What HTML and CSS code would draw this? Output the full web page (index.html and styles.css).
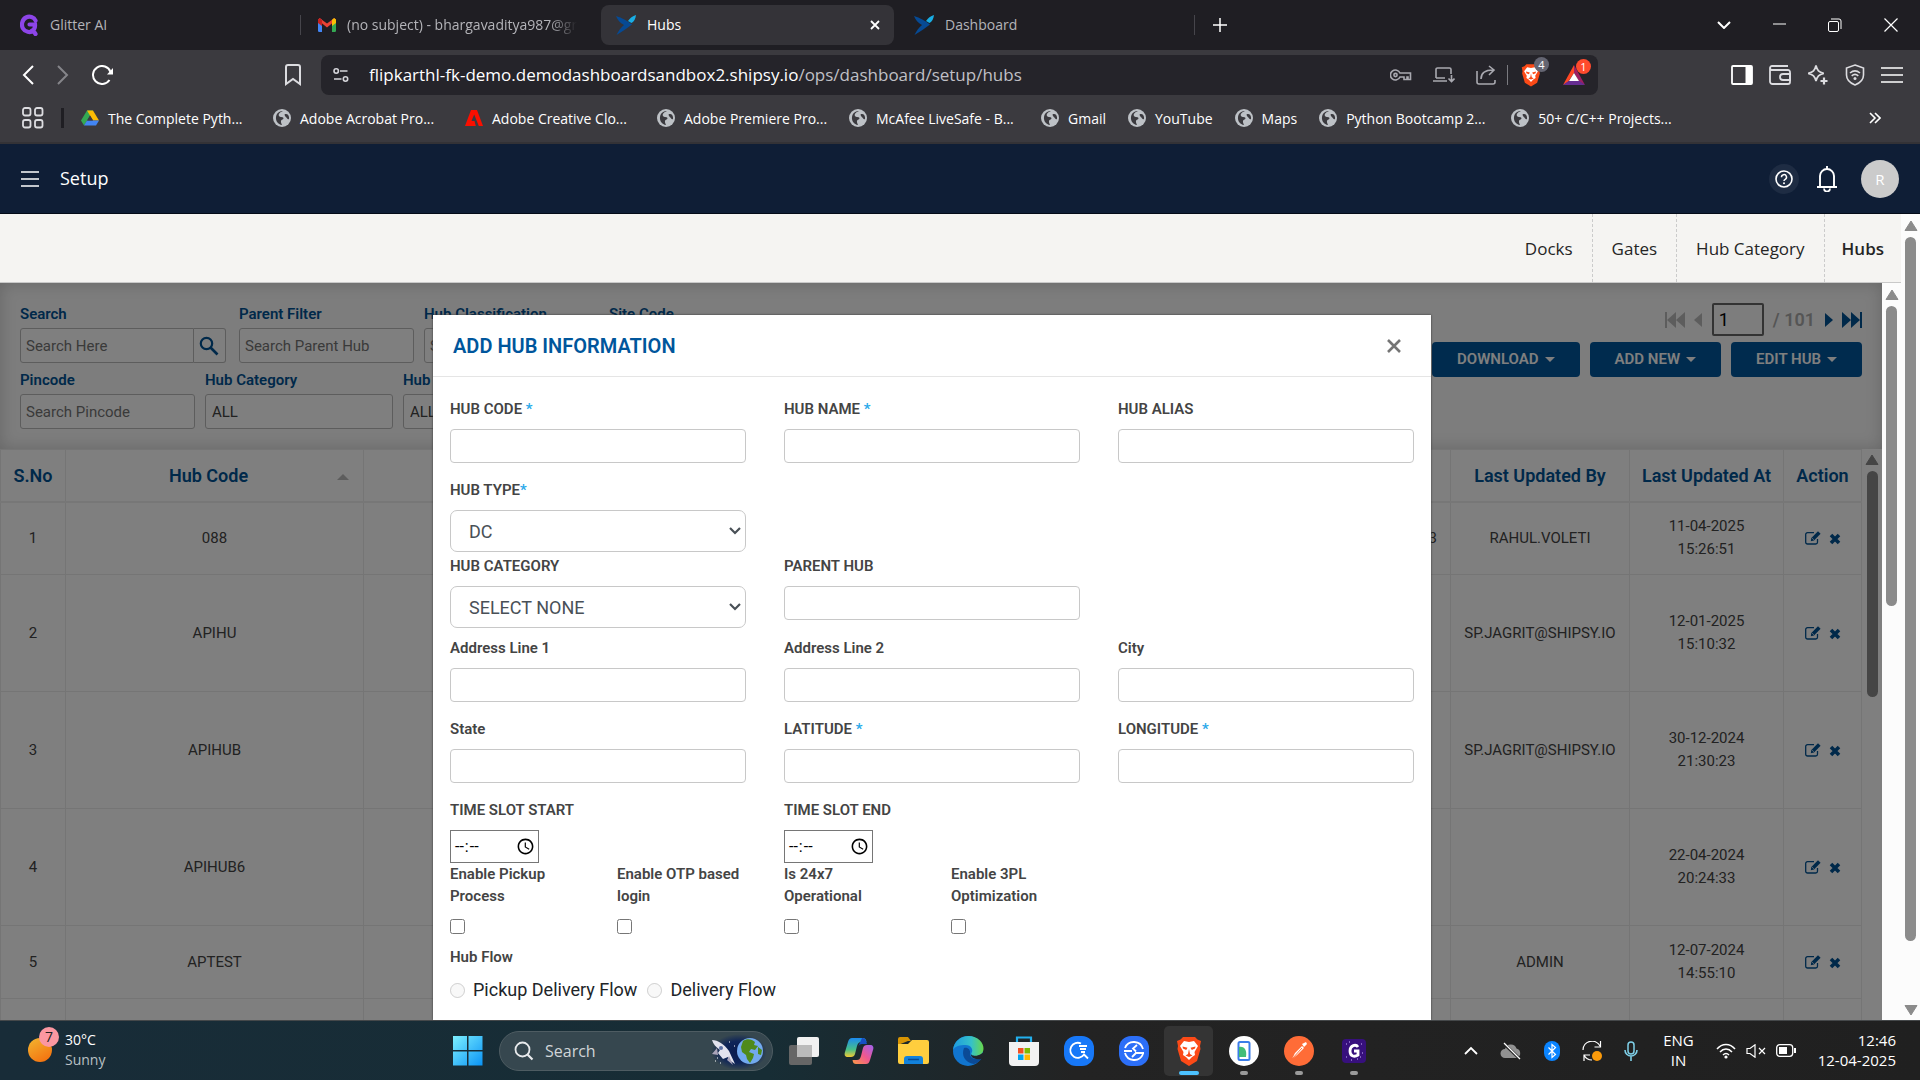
FILE: index.html
```html
<!DOCTYPE html>
<html lang="en">
<head>
<meta charset="utf-8">
<title>Hubs</title>
<link rel="stylesheet" href="styles.css">
</head>
<body>
<svg class="defs" aria-hidden="true">
  <symbol id="globe" viewBox="0 0 18 18"><circle cx="9" cy="9" r="9" fill="#bdc1c6"/><path d="M10 2c-3 1-5 3-4 5 1 1.600 4 .6 4.400 2 .4 1.600-2 1.500-2.400 3-.3 1.500.5 2.600 1 4-4-.5-6.500-4-6-8C3.500 4.500 6 2 10 2z" fill="#3b3a3f"/><path d="M11.500 5.500c1-.8 2.600-.6 3.500.2.900 1.300 1.200 2.600 1 4.300-.9.600-1.600 0-2-.8-.6-1.200-2.300-1.500-2.500-3.700z" fill="#3b3a3f"/></symbol>
  <symbol id="shipsy" viewBox="0 0 20 20"><path d="M0 1c6 2 11 4.500 16 8.500C11 13 6 17 .5 20 2.500 15.500 5 12.500 8 10 4 8 1.500 5 0 1z" fill="#064a94"/><path d="M20 0c-.5 4-2 6.500-4.500 8L12 6c2-3 4.500-5 8-6z" fill="#19aee5"/></symbol>
  <symbol id="edit" viewBox="0 0 16 14"><path d="M12.500 8v3.200a1.800 1.800 0 0 1-1.800 1.800H2.500A1.800 1.800 0 0 1 .7 11.200V3.500a1.800 1.800 0 0 1 1.800-1.800H9" fill="none" stroke="#005294" stroke-width="1.300"/><path d="M13 .3l2.600 2.400-6.600 6.800-3.200.8.500-3.300z" fill="#005294"/><path d="M7.200 7.200l1.600 1.500" stroke="#fff" stroke-width=".8"/></symbol>
  <symbol id="cross" viewBox="0 0 12 12"><path d="M2 2l8 8M10 2l-8 8" stroke="#005294" stroke-width="3.600"/></symbol>
  <symbol id="up" viewBox="0 0 14 12"><path d="M7 1l6 9.500H1z" fill="currentColor" stroke="currentColor" stroke-linejoin="round"/></symbol>
  <symbol id="lion" viewBox="0 0 26 30"><path d="M7 1h12l2.500 2.500L25 5l-1 5 .5 3-3.500 12-8 5-8-5L1.500 13l.5-3-1-5 3.500-1.500z" fill="#fb4a17"/><path d="M8 5l5 1 5-1 4 5-3.500 6 .5 3-3 2-3 3-3-3-3-2 .5-3L4 10z" fill="#fff"/><path d="M6.500 10.500l5 1.200-1.300 2.300-3.200-1.400zM19.500 10.500l-5 1.200 1.300 2.300 3.200-1.400zM13 13l1 5 2.500 1.500L13 21l-3.500-1.500L12 18z" fill="#fb4a17"/></symbol>
</svg>

<header class="browser">
  <nav class="tabs" aria-label="Tabs">
    <div class="tab">
      <svg width="19" height="22" viewBox="0 0 19 22"><path d="M15.500 6.500C14 3 9.500 1.800 6 3.500 2 5.500 1 11 3 14.500c2 3.500 7 4.500 10.500 2.500l2 3M9.500 10.500h5.500c.3 3-1 5.500-3.500 6.500" fill="none" stroke="#8d45e8" stroke-width="4.200" stroke-linecap="round"/></svg>
      <span>Glitter AI</span>
    </div>
    <div class="tab tab--fade">
      <svg width="18" height="14" viewBox="0 0 18 14"><path d="M0 1.500h4V14H1.200A1.200 1.200 0 0 1 0 12.800z" fill="#4285f4"/><path d="M14 1.500h4v11.300a1.200 1.200 0 0 1-1.200 1.200H14z" fill="#34a853"/><path d="M0 2l1.500-2L9 5.600 16.500 0 18 2 9 9.500z" fill="#ea4335"/><path d="M14 2l2-2 2 1.500V5l-4 3z" fill="#fbbc04"/><path d="M0 1.500L2 0l2 2v6L0 5z" fill="#c5221f"/></svg>
      <span>(no subject) - bhargavaditya987@gr</span>
    </div>
    <div class="tab tab--active">
      <svg width="20" height="20"><use href="#shipsy"/></svg>
      <span>Hubs</span>
      <button class="icon-btn tab-close" aria-label="Close tab"><svg width="10" height="10" viewBox="0 0 10 10"><path d="M1 1l8 8M9 1L1 9" stroke="#fff" stroke-width="1.800"/></svg></button>
    </div>
    <div class="tab">
      <svg width="20" height="20"><use href="#shipsy"/></svg>
      <span>Dashboard</span>
    </div>
    <button class="icon-btn new-tab" aria-label="New tab"><svg width="14" height="14" viewBox="0 0 14 14"><path d="M7 0v14M0 7h14" stroke="#fff" stroke-width="1.500"/></svg></button>
    <div class="window-controls">
      <svg width="14" height="8" viewBox="0 0 14 8"><path d="M1 1l6 6 6-6" fill="none" stroke="#fff" stroke-width="2"/></svg>
      <svg width="13" height="14" viewBox="0 0 13 14"><path d="M0 6h13" stroke="#fff"/></svg>
      <svg width="14" height="14" viewBox="0 0 14 14"><rect x=".5" y="3.500" width="10" height="10" rx="1.500" fill="none" stroke="#fff"/><path d="M3 1h8a2 2 0 0 1 2 2v8" fill="none" stroke="#fff"/></svg>
      <svg width="14" height="14" viewBox="0 0 14 14"><path d="M.5.5l13 13M13.500.5l-13 13" stroke="#fff" stroke-width="1.200"/></svg>
    </div>
  </nav>

  <div class="toolbar">
    <div class="history">
      <svg width="12" height="20" viewBox="0 0 12 20"><path d="M11 1L2 10l9 9" fill="none" stroke="#fff" stroke-width="2"/></svg>
      <svg width="12" height="20" viewBox="0 0 12 20"><path d="M1 1l9 9-9 9" fill="none" stroke="#85858a" stroke-width="2"/></svg>
      <svg width="22" height="20" viewBox="0 0 22 20"><path d="M17.500 15A9 9 0 1 1 18.500 7" fill="none" stroke="#fff" stroke-width="2"/><path d="M21 3v6.500h-6z" fill="#fff"/></svg>
    </div>
    <svg width="16" height="22" viewBox="0 0 16 22"><path d="M1 3a2 2 0 0 1 2-2h10a2 2 0 0 1 2 2v17l-7-5-7 5z" fill="none" stroke="#dcdce0" stroke-width="2"/></svg>
    <div class="address">
      <svg width="16" height="16" viewBox="0 0 16 16"><g fill="none" stroke="#d5d5da" stroke-width="1.600"><circle cx="3.200" cy="4" r="2.200"/><path d="M7 4h7.500M1 12h7.500"/><circle cx="12.500" cy="12" r="2.200"/></g></svg>
      <span class="url">flipkarthl-fk-demo.demodashboardsandbox2.shipsy.io<span class="url-path">/ops/dashboard/setup/hubs</span></span>
      <div class="address-icons">
        <svg width="22" height="12" viewBox="0 0 22 12"><g fill="none" stroke="#a9a9b0" stroke-width="1.600"><path d="M10 4A5 5 0 1 0 10 8h4v2.500h3V8h1v2.500h2.500V4z"/><circle cx="5.500" cy="6" r="1.600"/></g></svg>
        <svg width="22" height="16" viewBox="0 0 22 16"><path d="M3 11V2.500A1.500 1.500 0 0 1 4.500 1h12A1.500 1.500 0 0 1 18 2.500V7M0 14h14M3 11h9M18.500 8v6M15.500 11.500l3 3 3-3" fill="none" stroke="#a9a9b0" stroke-width="1.600"/></svg>
        <svg width="20" height="20" viewBox="0 0 20 20"><path d="M1 6v11a2 2 0 0 0 2 2h14a2 2 0 0 0 2-2v-2M5 14c0-6 4-9 12-9M13 1l5 4-5 5" fill="none" stroke="#a9a9b0" stroke-width="1.600"/></svg>
        <i class="rule"></i>
        <span class="badged"><svg width="20" height="24"><use href="#lion"/></svg><b class="badge">4</b></span>
        <span class="badged"><svg width="22" height="20" viewBox="0 0 22 20"><path d="M11 0L0 20l5-3 6-9z" fill="#ff4724"/><path d="M11 0l11 20-5.500-3L11 8z" fill="#9e1f63"/><path d="M0 20l5.500-4h11L22 20z" fill="#662d91"/><path d="M11 8l5 8H6z" fill="#fff"/></svg><b class="badge badge--red">1</b></span>
      </div>
    </div>
    <div class="panel-icons">
      <svg width="22" height="20" viewBox="0 0 22 20"><rect x="1" y="1" width="20" height="18" rx="1" fill="none" stroke="#fff" stroke-width="1.800"/><path d="M14.500 1H21v18h-6.500z" fill="#fff"/></svg>
      <svg width="22" height="20" viewBox="0 0 22 20"><g fill="none" stroke="#dcdce0" stroke-width="1.800"><path d="M1 3v13.500A2.500 2.500 0 0 0 3.500 19H19a2 2 0 0 0 2-2V7a2 2 0 0 0-2-2H3a2 2 0 0 1 0-4h16"/><path d="M21 9h-7a3 3 0 0 0 0 6h7z"/></g></svg>
      <svg width="22" height="22" viewBox="0 0 22 22"><path d="M9 1.500c1.200 5 2.800 6.700 7.800 7.800-5 1.200-6.600 2.800-7.800 7.800-1.200-5-2.800-6.600-7.800-7.800 5-1.100 6.600-2.800 7.800-7.800z" fill="none" stroke="#dcdce0" stroke-width="1.700"/><path d="M17 13.500v7M13.500 17h7" stroke="#dcdce0" stroke-width="2.200"/></svg>
      <svg width="20" height="22" viewBox="0 0 20 22"><g fill="none" stroke="#dcdce0" stroke-width="1.600"><path d="M10 1l8.500 3v7c0 5-3.500 8-8.500 10-5-2-8.500-5-8.500-10V4z"/><path d="M5 9c3-2.600 7-2.600 10 0M6.700 11.800c2-1.700 4.600-1.700 6.600 0"/></g><circle cx="10" cy="14.500" r="1.500" fill="#dcdce0"/></svg>
      <svg width="22" height="16" viewBox="0 0 22 16"><path d="M0 1h22M0 8h22M0 15h22" stroke="#fff" stroke-width="1.700"/></svg>
    </div>
  </div>

  <nav class="bookmarks" aria-label="Bookmarks">
    <svg width="22" height="22" viewBox="0 0 22 22"><g fill="none" stroke="#dcdce0" stroke-width="1.800"><rect x="1" y="1" width="7.500" height="7.500" rx="2"/><rect x="13" y="1" width="7.500" height="7.500" rx="2"/><rect x="1" y="13" width="7.500" height="7.500" rx="2"/><rect x="13" y="13" width="7.500" height="7.500" rx="2"/></g></svg>
    <i class="rule rule--dark"></i>
    <a class="bookmark bookmark--long" href="#"><svg width="18" height="18" viewBox="0 0 18 18"><path d="M6 1.500h6L6 12l-3 4.500-3-5z" fill="#34a853"/><path d="M6 1.500h6l6 10h-6z" fill="#fbbc04"/><path d="M6 11.500h12l-3 5H3z" fill="#4285f4"/><path d="M9 6.500l-3 5h6z" fill="#3b3a3f"/></svg>The Complete Pyth...</a>
    <a class="bookmark bookmark--long" href="#"><svg width="18" height="18"><use href="#globe"/></svg>Adobe Acrobat Pro...</a>
    <a class="bookmark bookmark--long" href="#"><svg width="18" height="18" viewBox="0 0 18 18"><path d="M6 1h6l6 16h-4.200L9.200 5.500 6.500 12h3l1.300 5H0z" fill="#fa0f00"/></svg>Adobe Creative Clo...</a>
    <a class="bookmark bookmark--long" href="#"><svg width="18" height="18"><use href="#globe"/></svg>Adobe Premiere Pro...</a>
    <a class="bookmark bookmark--long" href="#"><svg width="18" height="18"><use href="#globe"/></svg>McAfee LiveSafe - B...</a>
    <a class="bookmark" href="#"><svg width="18" height="18"><use href="#globe"/></svg>Gmail</a>
    <a class="bookmark" href="#"><svg width="18" height="18"><use href="#globe"/></svg>YouTube</a>
    <a class="bookmark" href="#"><svg width="18" height="18"><use href="#globe"/></svg>Maps</a>
    <a class="bookmark bookmark--long" href="#"><svg width="18" height="18"><use href="#globe"/></svg>Python Bootcamp 2...</a>
    <a class="bookmark bookmark--long" href="#"><svg width="18" height="18"><use href="#globe"/></svg>50+ C/C++ Projects...</a>
    <svg class="more" width="12" height="12" viewBox="0 0 12 12"><path d="M1 1l5 5-5 5M6 1l5 5-5 5" fill="none" stroke="#fff" stroke-width="1.600"/></svg>
  </nav>
</header>

<header class="app-bar">
  <svg width="18" height="16" viewBox="0 0 18 16"><path d="M0 1h18M0 8h18M0 15h18" stroke="#fff" stroke-width="1.500"/></svg>
  <h1>Setup</h1>
  <div class="app-actions">
    <button class="help" aria-label="Help"><svg width="18" height="18" viewBox="0 0 18 18"><circle cx="9" cy="9" r="8" fill="none" stroke="#fff" stroke-width="1.600"/><path d="M6.500 7.200a2.500 2.500 0 1 1 3.700 2.100C9.300 9.800 9 10 9 11" fill="none" stroke="#fff" stroke-width="1.500"/><circle cx="9" cy="13.200" r="1" fill="#fff"/></svg></button>
    <button class="icon-btn" aria-label="Notifications"><svg width="20" height="26" viewBox="0 0 20 26"><path d="M10 0v3M3 20.500V10a7 7 0 0 1 14 0v10.500M0 21h20" fill="none" stroke="#fff" stroke-width="1.900"/><path d="M7 22.500a3 3 0 0 0 6 0" fill="none" stroke="#fff" stroke-width="1.700"/></svg></button>
    <span class="avatar">R</span>
  </div>
</header>

<div class="app">
  <div class="page">
    <nav class="subnav" aria-label="Setup sections">
      <a href="#">Docks</a>
      <a href="#">Gates</a>
      <a href="#">Hub Category</a>
      <a class="current" href="#">Hubs</a>
    </nav>
    <div class="frame">
      <main class="content">
        <section class="filters">
          <div class="filter-rows">
            <div class="filter-row">
              <div class="filter"><label for="f-search">Search</label><div class="search-group"><input class="box" id="f-search" placeholder="Search Here"><button aria-label="Search"><svg width="20" height="20" viewBox="0 0 20 20"><circle cx="7.500" cy="7.500" r="5.700" fill="none" stroke="#005294" stroke-width="2.200"/><path d="M11.500 11.500l7 7" stroke="#005294" stroke-width="2.600"/></svg></button></div></div>
              <div class="filter"><label for="f-parent">Parent Filter</label><input class="box" id="f-parent" placeholder="Search Parent Hub"></div>
              <div class="filter"><label for="f-class">Hub Classification</label><input class="box" id="f-class" placeholder="Search"></div>
              <div class="filter"><label for="f-site">Site Code</label><input class="box" id="f-site"></div>
            </div>
            <div class="filter-row">
              <div class="filter"><label for="f-pin">Pincode</label><input class="box" id="f-pin" placeholder="Search Pincode"></div>
              <div class="filter"><label for="f-cat">Hub Category</label><select class="box box--select" id="f-cat"><option>ALL</option></select></div>
              <div class="filter"><label for="f-type">Hub Type</label><select class="box box--select" id="f-type"><option>ALL</option></select></div>
            </div>
          </div>
          <div class="table-tools">
            <div class="pager">
              <svg class="off" width="20" height="16" viewBox="0 0 20 16"><path d="M0 0h2v16H0zM11 0v16L2 8zM20 0v16l-9-8z" fill="currentColor"/></svg>
              <svg class="off" width="9" height="14" viewBox="0 0 9 14"><path d="M8 0v14L0 7z" fill="currentColor"/></svg>
              <input aria-label="Page" value="1">
              <span>/ 101</span>
              <svg width="9" height="14" viewBox="0 0 9 14"><path d="M1 0v14l8-7z" fill="currentColor"/></svg>
              <svg width="20" height="16" viewBox="0 0 20 16"><path d="M18 0h2v16h-2zM9 0v16l9-8zM0 0v16l9-8z" fill="currentColor"/></svg>
            </div>
            <div class="buttons">
              <button>DOWNLOAD<i class="caret"></i></button>
              <button>ADD NEW<i class="caret"></i></button>
              <button>EDIT HUB<i class="caret"></i></button>
            </div>
          </div>
        </section>
        <div class="table-wrap">
          <table>
            <colgroup><col class="c-no"><col class="c-code"><col><col class="c-by"><col class="c-at"><col class="c-act"></colgroup>
            <thead><tr><th>S.No</th><th class="sorted">Hub Code<i class="sort"></i></th><th></th><th>Last Updated By</th><th>Last Updated At</th><th>Action</th></tr></thead>
            <tbody>
              <tr class="short"><td>1</td><td>088</td><td class="end">3</td><td>RAHUL.VOLETI</td><td>11-04-2025<br>15:26:51</td><td><svg width="16" height="14"><use href="#edit"/></svg><svg width="12" height="12"><use href="#cross"/></svg></td></tr>
              <tr><td>2</td><td>APIHU</td><td></td><td>SP.JAGRIT@SHIPSY.IO</td><td>12-01-2025<br>15:10:32</td><td><svg width="16" height="14"><use href="#edit"/></svg><svg width="12" height="12"><use href="#cross"/></svg></td></tr>
              <tr><td>3</td><td>APIHUB</td><td></td><td>SP.JAGRIT@SHIPSY.IO</td><td>30-12-2024<br>21:30:23</td><td><svg width="16" height="14"><use href="#edit"/></svg><svg width="12" height="12"><use href="#cross"/></svg></td></tr>
              <tr><td>4</td><td>APIHUB6</td><td></td><td></td><td>22-04-2024<br>20:24:33</td><td><svg width="16" height="14"><use href="#edit"/></svg><svg width="12" height="12"><use href="#cross"/></svg></td></tr>
              <tr class="short"><td>5</td><td>APTEST</td><td></td><td>ADMIN</td><td>12-07-2024<br>14:55:10</td><td><svg width="16" height="14"><use href="#edit"/></svg><svg width="12" height="12"><use href="#cross"/></svg></td></tr>
              <tr><td></td><td></td><td></td><td></td><td></td><td></td></tr>
            </tbody>
          </table>
          <div class="bar bar--table"><svg width="14" height="12"><use href="#up"/></svg><i></i></div>
        </div>

        <div class="overlay">
          <form class="modal" role="dialog" aria-labelledby="modal-title">
            <header><h2 id="modal-title">ADD HUB INFORMATION</h2><button type="button" class="icon-btn" aria-label="Close"><svg width="14" height="14" viewBox="0 0 14 14"><path d="M1 1l12 12M13 1L1 13" stroke="#757575" stroke-width="2.600"/></svg></button></header>
            <div class="row">
              <div class="field"><label for="code">HUB CODE <em>*</em></label><input id="code"></div>
              <div class="field"><label for="name">HUB NAME <em>*</em></label><input id="name"></div>
              <div class="field"><label for="alias">HUB ALIAS</label><input id="alias"></div>
            </div>
            <div class="row row--tight">
              <div class="field"><label for="type">HUB TYPE<em>*</em></label><select id="type"><option>DC</option></select></div>
            </div>
            <div class="row row--mid">
              <div class="field"><label for="category">HUB CATEGORY</label><select id="category"><option>SELECT NONE</option></select></div>
              <div class="field"><label for="parent">PARENT HUB</label><input id="parent"></div>
            </div>
            <div class="row">
              <div class="field"><label for="line1">Address Line 1</label><input id="line1"></div>
              <div class="field"><label for="line2">Address Line 2</label><input id="line2"></div>
              <div class="field"><label for="city">City</label><input id="city"></div>
            </div>
            <div class="row">
              <div class="field"><label for="state">State</label><input id="state"></div>
              <div class="field"><label for="lat">LATITUDE <em>*</em></label><input id="lat"></div>
              <div class="field"><label for="lng">LONGITUDE <em>*</em></label><input id="lng"></div>
            </div>
            <div class="row row--flush">
              <div class="field"><label for="start">TIME SLOT START</label><input type="time" id="start"></div>
              <div class="field"><label for="end">TIME SLOT END</label><input type="time" id="end"></div>
            </div>
            <div class="checks">
              <div class="check"><label for="pickup">Enable Pickup Process</label><input type="checkbox" id="pickup"></div>
              <div class="check"><label for="otp">Enable OTP based login</label><input type="checkbox" id="otp"></div>
              <div class="check"><label for="allday">Is 24x7 Operational</label><input type="checkbox" id="allday"></div>
              <div class="check"><label for="tpl">Enable 3PL Optimization</label><input type="checkbox" id="tpl"></div>
            </div>
            <fieldset class="flow">
              <legend>Hub Flow</legend>
              <div class="radios">
                <label><input type="radio" name="flow" disabled>Pickup Delivery Flow</label>
                <label><input type="radio" name="flow" disabled>Delivery Flow</label>
              </div>
            </fieldset>
          </form>
        </div>
      </main>
      <div class="bar bar--frame"><svg width="14" height="12"><use href="#up"/></svg><i></i></div>
    </div>
  </div>
  <div class="bar bar--page"><svg width="14" height="12"><use href="#up"/></svg><i></i><svg class="down" width="14" height="12"><use href="#up"/></svg></div>
</div>

<footer class="taskbar">
  <div class="weather">
    <span class="sun"><b>7</b></span>
    <div><div>30°C</div><div class="dim">Sunny</div></div>
  </div>
  <div class="dock">
    <svg class="win" width="30" height="30" viewBox="0 0 30 30"><defs><linearGradient id="wg" x1="0" y1="0" x2="1" y2="1"><stop offset="0" stop-color="#7df0ff"/><stop offset="1" stop-color="#0a93f5"/></linearGradient></defs><path d="M0 0h14v14H0zM15.500 0h14v14h-14zM0 15.500h14v14H0zM15.500 15.500h14v14h-14z" fill="url(#wg)"/></svg>
    <div class="search">
      <svg width="20" height="20" viewBox="0 0 20 20"><circle cx="8.500" cy="8.500" r="7" fill="none" stroke="#e8eaec" stroke-width="1.800"/><path d="M13.500 13.500l5 5" stroke="#e8eaec" stroke-width="2.200"/></svg>
      <input aria-label="Search" placeholder="Search">
      <svg width="60" height="36" viewBox="0 0 60 36"><defs><radialGradient id="sp"><stop offset="0" stop-color="#0a1a4c"/><stop offset=".6" stop-color="#0e2458"/><stop offset="1" stop-color="#0e2458" stop-opacity="0"/></radialGradient></defs><ellipse cx="32" cy="19" rx="28" ry="18" fill="url(#sp)"/><path d="M5 7c6 0 12 4 17 11l6 13-6-4-1-3-5 2-5-6 2-3C9 14 6 11 5 7z" fill="#e3e3ee"/><path d="M10 15l-5 6 6 1zM22 23l4 9-6-5z" fill="#a9a3b8"/><circle cx="14" cy="15" r="2" fill="#5b6fa5"/><path d="M27 13h1M8 28h1M13 30h1M22 9h1M10 25h1" stroke="#fff"/><circle cx="43" cy="18" r="13" fill="#72a9ef"/><path d="M36 8c4-3 9-2 12 1l-1 3 4 1-3 4-4-1-2 3 5 2-1 4-3 5-3-4-1-4-4-3-1-5z" fill="#4f8a1b"/><path d="M51 14l4 3-1 5-3-1z" fill="#4f8a1b"/></svg>
    </div>
    <span class="app-icon"><svg width="30" height="28" viewBox="0 0 30 28"><rect y="8" width="23" height="20" rx="2" fill="#666"/><rect x="8" width="22" height="20" rx="2" fill="#f1f1f1"/><path d="M8 8h15v12H8z" fill="#bbb"/></svg></span>
    <span class="app-icon"><svg width="30" height="28" viewBox="0 0 30 28"><defs><linearGradient id="c1" x1="0" y1="0" x2="0" y2="1"><stop offset="0" stop-color="#1c8bf0"/><stop offset=".6" stop-color="#47c089"/><stop offset="1" stop-color="#f3c933"/></linearGradient><linearGradient id="c2" x1="1" y1="0" x2="0" y2="1"><stop offset="0" stop-color="#a062f0"/><stop offset=".5" stop-color="#f0588f"/><stop offset="1" stop-color="#fa9a45"/></linearGradient></defs><path d="M8 1h11c2 0 3 1 3.500 4H17c-2 0-3 1-4 4l-2 8c-.5 2-2 3-4 3H4c-3 0-4-2-3-5L4 5c1-3 2-4 4-4z" fill="url(#c1)"/><path d="M22 27H12c-2 0-3-1-3.500-4H13c2 0 3-1 4-4l2-8c.5-2 2-3 4-3h3c3 0 4 2 3 5l-3 10c-1 3-2 4-4 4z" fill="url(#c2)"/><path d="M18 1c3 0 4 2 5 6h-5c-2 0-3 1-4 3z" fill="#174fc4"/></svg></span>
    <span class="app-icon"><svg width="31" height="28" viewBox="0 0 31 28"><path d="M0 2a2 2 0 0 1 2-2h8l3 4h-3L0 8z" fill="#d89403"/><path d="M0 7h10l4-4h15a2 2 0 0 1 2 2v20a2 2 0 0 1-2 2H2a2 2 0 0 1-2-2z" fill="#ffce3e"/><path d="M6 27v-5a3 3 0 0 1 3-3h13a3 3 0 0 1 3 3v5z" fill="#1282dc"/><path d="M10 22.500h11" stroke="#064a94" stroke-width="1.500"/></svg></span>
    <span class="app-icon"><svg width="31" height="30" viewBox="0 0 31 30"><defs><linearGradient id="eg"><stop offset="0" stop-color="#1d9ae0"/><stop offset=".6" stop-color="#35c1c9"/><stop offset="1" stop-color="#69d84a"/></linearGradient></defs><circle cx="15" cy="15" r="15" fill="#1175cf"/><path d="M0 14C1 5 8 0 15.500 0 25 0 31 7 30.500 13c-.5 5-4 7-8 7-3 0-5-1-4-3 2-3 0-8-6-8C7 9 2 10 0 14z" fill="url(#eg)"/><path d="M11 12c-3 7 1 15 10 16 4-1 6-3 8-6-6 3-13 0-12-5 .5-3-2-6-6-5z" fill="#0b4a96"/><path d="M18 17c-1 3 6 4 10 1l3-2v6l-3 1c-5 1-11-1-10-6z" fill="#20252a"/></svg></span>
    <span class="app-icon"><svg width="30" height="30" viewBox="0 0 30 30"><path d="M8 7V1.500h14V7" fill="none" stroke="#22b0ee" stroke-width="2.200"/><path d="M0 6h30v20a4 4 0 0 1-4 4H4a4 4 0 0 1-4-4z" fill="#f2f2f2"/><path d="M9 12h5.500v5.500H9z" fill="#f25022"/><path d="M15.500 12H21v5.500h-5.500z" fill="#7fba00"/><path d="M9 18.500h5.500V24H9z" fill="#00a4ef"/><path d="M15.500 18.500H21V24h-5.500z" fill="#ffb900"/></svg></span>
    <span class="app-icon"><svg width="30" height="30" viewBox="0 0 30 30"><rect width="30" height="30" rx="12" fill="#1778f8"/><path d="M17 7.500a7.500 7.500 0 1 0 3 11l4 4M15 10h8M16 13h6M17 16h4" fill="none" stroke="#fff" stroke-width="1.800"/></svg></span>
    <span class="app-icon"><svg width="30" height="30" viewBox="0 0 30 30"><rect width="30" height="30" rx="12" fill="#2c6ff8"/><path d="M24 13A9.500 9.500 0 0 0 6 12M6 17a9.500 9.500 0 0 0 18 1M5 15h8M16 17h9M18 9l-4 3.500 3 3M13 21l4-4" fill="none" stroke="#fff" stroke-width="1.800"/></svg></span>
    <span class="app-icon app-icon--active"><svg width="26" height="30"><use href="#lion"/></svg></span>
    <span class="app-icon app-icon--open"><svg width="30" height="30" viewBox="0 0 30 30"><circle cx="15" cy="15" r="15" fill="#fff"/><rect x="9.500" y="6" width="11" height="18" rx="1.500" fill="#fff" stroke="#3b7de8" stroke-width="2"/><path d="M10 11c6-1 8 4 7 10h-7z" fill="#43bd77"/></svg></span>
    <span class="app-icon app-icon--open"><svg width="30" height="30" viewBox="0 0 30 30"><circle cx="15" cy="15" r="15" fill="#ff6c37"/><path d="M8 23l3-6 7-7 2 2-7 7zM18 8l4-2 1 2-3 3z" fill="#fff"/><path d="M8 23l10-11" stroke="#ff6c37"/></svg></span>
    <span class="app-icon app-icon--open"><svg width="24" height="24" viewBox="0 0 24 24"><rect width="24" height="24" rx="4" fill="#37107d"/><path d="M16 8c-2-3-8-2-8 4s5 6 8 4v-4h-4" fill="none" stroke="#fff" stroke-width="2.800"/><path d="M4 5h1M7 3h1M19 5h1M20 14h1M4 18h1M9 21h1M15 20h1M18 18h1" stroke="#cbb3ff"/></svg></span>
  </div>
  <div class="tray">
    <svg width="14" height="9" viewBox="0 0 14 9"><path d="M1 8l6-6 6 6" fill="none" stroke="#fff" stroke-width="1.800"/></svg>
    <svg width="22" height="18" viewBox="0 0 22 18"><path d="M5 16a4.500 4.500 0 0 1 0-9 6 6 0 0 1 11.500-.5A5 5 0 0 1 17 16z" fill="#929292"/><path d="M3 1l17 16" stroke="#222" stroke-width="3"/><path d="M4 1l16 16" stroke="#fff" stroke-width="1.200"/></svg>
    <svg width="16" height="20" viewBox="0 0 16 20"><rect width="16" height="20" rx="8" fill="#0a84ff"/><path d="M4.500 6.500l7 7L8 16.500v-13l3.500 3-7 7" fill="none" stroke="#fff" stroke-width="1.200"/></svg>
    <svg width="20" height="20" viewBox="0 0 20 20"><path d="M1 9A9 9 0 0 1 18 5M18.500 0v6h-6M2 20v-6h6M2 14c2 4 5 5 8 5" fill="none" stroke="#fff" stroke-width="1.200"/><circle cx="15" cy="15" r="5" fill="#fb9a0a"/></svg>
    <svg width="14" height="20" viewBox="0 0 14 20"><rect x="4" y="1" width="6" height="12" rx="3" fill="none" stroke="#7fd0e8" stroke-width="1.500"/><path d="M1 9a6 6 0 0 0 12 0M7 15v5" fill="none" stroke="#7fd0e8" stroke-width="1.600"/></svg>
    <div class="lang">ENG<br>IN</div>
    <svg width="20" height="16" viewBox="0 0 20 16"><path d="M1 6c5-6 13-6 18 0M4 9c3.500-4 8.500-4 12 0M7 12c2-2 4-2 6 0" fill="none" stroke="#fff" stroke-width="1.500"/><circle cx="10" cy="14" r="1.600" fill="#fff"/></svg>
    <svg width="20" height="14" viewBox="0 0 20 14"><path d="M1 4.500h3L9 .8v12.400L4 9.500H1z" fill="none" stroke="#fff" stroke-width="1.200"/><path d="M13 4l6 6M19 4l-6 6" stroke="#fff" stroke-width="1.200"/></svg>
    <svg width="20" height="13" viewBox="0 0 20 13"><rect x=".7" y=".7" width="16" height="11.600" rx="3" fill="none" stroke="#fff" stroke-width="1.300"/><rect x="3" y="3" width="8" height="7" fill="#fff"/><path d="M19 4v5" stroke="#fff" stroke-width="2"/></svg>
    <div class="clock">12:46<br>12-04-2025</div>
  </div>
</footer>
</body>
</html>
```
FILE: styles.css
```css
* { box-sizing: border-box; }

:root {
  --ui: "Open Sans", "Noto Sans", sans-serif;
  --blue: #005294;
}

body {
  margin: 0;
  height: 100vh;
  overflow: hidden;
  display: flex;
  flex-direction: column;
  font-family: Roboto, sans-serif;
  font-size: 15px;
}

button, input, select { font: inherit; margin: 0; }
svg { display: block; flex: none; }
a { text-decoration: none; color: inherit; }
.defs { position: absolute; width: 0; height: 0; }
.icon-btn { border: 0; background: none; padding: 0; display: flex; }

/* Browser window */
.browser {
  flex: none;
  background: #3b3a3f;
  color: #fff;
  font-family: var(--ui);
  font-size: 14px;
  border-bottom: 2px solid #333236;
}
.tabs {
  height: 50px;
  display: flex;
  align-items: center;
  gap: 5px;
  padding-left: 5px;
  background: #1f1e23;
  color: #b4b4b9;
}
.tab {
  position: relative;
  flex: 0 1 293px;
  min-width: 0;
  height: 40px;
  padding: 0 14px 0 15px;
  display: flex;
  align-items: center;
  gap: 11px;
  border-radius: 8px;
}
.tab span { overflow: hidden; white-space: nowrap; padding-bottom: 2px; }
.tab:first-child::after, .tab:nth-child(4)::after {
  content: "";
  position: absolute;
  right: -3px;
  top: 10px;
  height: 20px;
  border-right: 1px solid #46454b;
}
.tab--fade span { -webkit-mask-image: linear-gradient(90deg, #000 88%, transparent); mask-image: linear-gradient(90deg, #000 88%, transparent); }
.tab--active { background: #343338; color: #fff; }
.tab-close { margin-left: auto; }
.new-tab { margin-left: 16px; }
.window-controls { margin-left: auto; padding-right: 22px; display: flex; align-items: center; gap: 42px; }

.toolbar { height: 50px; display: flex; align-items: center; padding: 0 17px 0 22px; }
.history { display: flex; align-items: center; gap: 23px; width: 263px; flex: none; }
.address {
  flex: 0 1 1277px;
  min-width: 0;
  height: 40px;
  margin-left: 20px;
  padding: 0 12px;
  display: flex;
  align-items: center;
  border-radius: 8px;
  background: #25242a;
}
.url { margin-left: 20px; padding-bottom: 2px; font-size: 17px; white-space: nowrap; overflow: hidden; }
.url-path { color: #c0c0c6; }
.address-icons { margin-left: auto; display: flex; align-items: center; gap: 21px; }
.rule { width: 1px; height: 20px; background: #7a7a80; margin: 0 -8px 0 -10px; }
.rule--dark { width: 3px; background: #1f1e23; margin: 0 17px; }
.badged { position: relative; margin-right: 1px; }
.badge {
  position: absolute;
  left: 13px;
  top: -6px;
  width: 15px;
  height: 15px;
  border-radius: 50%;
  background: #646572;
  font: 11px/15px var(--ui);
  text-align: center;
}
.badge--red { background: #ff4a2d; }
.panel-icons { margin-left: auto; display: flex; align-items: center; gap: 16px; }

.bookmarks { height: 42px; padding: 0 39px 6px 22px; display: flex; align-items: center; }
.bookmark { flex: none; display: flex; align-items: center; gap: 9px; padding-right: 22px; white-space: nowrap; }
.bookmark--long { width: 192px; padding-right: 0; }
.more { margin-left: auto; }

/* Application header */
.app-bar {
  flex: none;
  height: 70px;
  padding: 0 21px;
  display: flex;
  align-items: center;
  gap: 21px;
  background: #0f1e36;
  border-bottom: 1px solid #040b18;
  color: #fff;
  font-family: var(--ui);
}
.app-bar h1 { margin: 0; padding-bottom: 2px; font-size: 18px; font-weight: 500; }
.app-actions { margin-left: auto; display: flex; align-items: center; gap: 24px; }
.help { width: 30px; height: 30px; margin-right: -6px; padding: 6px; border: 0; border-radius: 50%; background: #1e2c43; }
.avatar { width: 38px; height: 38px; border-radius: 50%; background: #cbcbcb; font-size: 15px; line-height: 38px; text-align: center; }

.app { flex: 1; min-height: 0; display: flex; }
.page { flex: 1; min-width: 0; display: flex; flex-direction: column; }
.subnav {
  flex: none;
  height: 69px;
  display: flex;
  justify-content: flex-end;
  background: #f5f4f2;
  border-bottom: 1px solid #c9c9c9;
  font: 17px/70px var(--ui);
  color: #252525;
}
.subnav a { height: 68px; padding: 0 19px; border-left: 1px dashed #cbcbcb; }
.subnav a:first-child { border-left: 0; }
.subnav .current { padding: 0 17px; font-weight: 600; }

/* Scroll bars */
.bar { flex: none; width: 19px; background: #fcfcfc; color: #8b8b8b; display: flex; flex-direction: column; align-items: center; padding-top: 6px; gap: 5px; }
.bar i { width: 11px; border-radius: 6px; background: currentColor; height: 88%; }
.bar .down { transform: rotate(180deg); margin-top: auto; margin-bottom: 4px; }
.bar--frame i { height: 41%; }
.bar--table { width: 20px; padding-top: 5px; color: #8b8b8b; background: #fff; }
.bar--table i { height: 226px; }

.frame { flex: 1; min-height: 0; display: flex; }
.content { position: relative; flex: 1; min-width: 0; overflow: hidden; display: flex; flex-direction: column; background: #fff; }

/* Filters */
.filters {
  flex: none;
  display: flex;
  justify-content: space-between;
  padding: 20px;
  background: #fafafa;
  box-shadow: inset 0 0 16px #ccc;
}
.filter-rows { display: flex; flex-direction: column; gap: 6px; }
.filter-row { display: flex; gap: 10px; }
.filter-row:first-child .filter:first-child { margin-right: 3px; }
.filter { display: flex; flex-direction: column; gap: 3px; }
.filter label { color: var(--blue); font-weight: 600; line-height: 22px; }
.box {
  width: 175px;
  height: 35px;
  padding: 0 5px;
  border: 1px solid #bbb;
  border-radius: 3px;
  background: #fff;
  color: #444;
}
.box::placeholder { color: #757575; }
.box--select { width: 188px; padding: 0 6px; appearance: none; }
.search-group { display: flex; }
.search-group .box { width: 174px; border-radius: 3px 0 0 3px; }
.search-group button { width: 32px; height: 35px; padding: 6px 5px; border: 1px solid #bbb; border-left: 0; border-radius: 0 3px 3px 0; background: #fff; }

.table-tools { display: flex; flex-direction: column; align-items: flex-end; gap: 6px; }
.pager { display: flex; align-items: center; gap: 9px; color: var(--blue); }
.pager .off { color: #bbb; }
.pager input { width: 52px; height: 33px; padding: 0 5px; border: 2px solid #666; border-radius: 2px; background: #fafafa; color: #000; font-size: 18px; }
.pager span { color: #aaa; font-size: 18px; font-weight: 600; }
.buttons { display: flex; gap: 10px; }
.buttons button { height: 35px; padding: 0 25px 2px; border: 0; border-radius: 4px; background: #00569c; color: #fff; font-weight: 600; white-space: nowrap; }
.caret { display: inline-block; margin-left: 6px; vertical-align: 2px; border: 5px solid transparent; border-top-color: #fff; border-bottom: 0; }

/* Hub table */
.table-wrap { flex: 1; min-height: 0; display: flex; background: #fff; }
table { flex: 1; width: 100%; table-layout: fixed; border-collapse: collapse; align-self: flex-start; color: #444; text-align: center; }
.c-no { width: 65px; }
.c-code { width: 298px; }
.c-by { width: 179px; }
.c-at { width: 154px; }
.c-act { width: 78px; }
th, td { padding: 0; border: 1px solid #ebebeb; line-height: 23px; }
th { height: 52px; color: var(--blue); font-size: 18px; font-weight: 600; border-bottom: 2px solid #eee; }
td { height: 117px; }
.short td { height: 73px; }
td.end { text-align: right; padding-right: 13px; }
td svg { display: inline-block; vertical-align: -2px; margin: 0 4px; }
.sorted { position: relative; padding-right: 12px; }
.sort { position: absolute; right: 14px; top: 24px; border: 6px solid transparent; border-top: 0; border-bottom-color: #bbb; }

/* Add hub dialog */
.overlay { position: absolute; inset: 0; display: flex; justify-content: center; padding: 32px 18px 0 0; background: rgba(0, 0, 0, .5); }
.modal { width: 998px; background: #fff; box-shadow: 0 0 2px #333; }
.modal header { height: 62px; margin-bottom: 21px; padding: 0 30px 0 20px; display: flex; align-items: center; justify-content: space-between; border-bottom: 1px solid #e5e5e5; }
.modal h2 { margin: 0; color: #00569c; font-size: 20px; font-weight: 600; }
.row { display: grid; grid-template-columns: repeat(3, 1fr); gap: 38px; padding: 0 17px; margin-bottom: 16px; }
.row--tight { margin-bottom: 3px; }
.row--mid { margin-bottom: 9px; }
.row--flush { margin-bottom: 0; }
.field { display: flex; flex-direction: column; align-items: flex-start; gap: 9px; }
.modal label, .flow legend { color: #444; font-weight: 600; line-height: 22px; }
.modal em { color: #29a9ea; font-style: normal; }
.field input, .field select { width: 100%; height: 34px; border: 1px solid #c8c8c8; border-radius: 4px; background: #fff; }
.field select {
  height: 42px;
  padding: 0 18px;
  appearance: none;
  border-radius: 7px;
  background: #fff url("data:image/svg+xml,%3Csvg xmlns='http://www.w3.org/2000/svg' width='12' height='8'%3E%3Cpath d='M1 1l5 5 5-5' fill='none' stroke='%23495057' stroke-width='2.2'/%3E%3C/svg%3E") no-repeat right 4px center;
  color: #495057;
  font-size: 18px;
}
.field input[type="time"] { width: 89px; height: 33px; padding: 1px 3px; border-color: #767676; border-radius: 0; color: #000; font-size: 16px; }
.field input::-webkit-datetime-edit-ampm-field { display: none; }
.field input::-webkit-calendar-picker-indicator { width: 19px; height: 19px; margin: 0; padding: 0; background-size: 19px; }
.checks { display: grid; grid-template-columns: repeat(4, 167px); padding-left: 17px; }
.check { display: flex; flex-direction: column; align-items: flex-start; gap: 12px; padding-right: 37px; }
.check input, .radios input { width: 15px; height: 15px; margin: 0; }
.flow { margin: 12px 0 0; padding: 0 17px; border: 0; }
.flow legend { padding: 0; }
.radios { display: flex; gap: 10px; padding-top: 9px; }
.radios label { display: flex; align-items: center; gap: 8px; color: #212529; font-size: 18px; font-weight: 400; line-height: 26px; }

/* Taskbar */
.taskbar {
  flex: none;
  height: 60px;
  display: grid;
  grid-template-columns: 453px auto 1fr;
  align-items: center;
  background: linear-gradient(90deg, #182c38 0%, #172d35 40%, #232323 56%, #202020 100%);
  border-top: 1px solid #45484a;
  color: #fff;
  font: 14px/20px var(--ui);
}
.weather { display: flex; align-items: center; gap: 13px; padding: 0 0 2px 28px; }
.dim { color: #b9c0c4; }
.sun { position: relative; width: 24px; height: 24px; border-radius: 50%; background: linear-gradient(150deg, #f3b630, #f36a0c); }
.sun b { position: absolute; left: 11px; top: -11px; width: 20px; height: 20px; border-radius: 50%; background: #fb97a1; color: #222; font-weight: 400; text-align: center; }
.dock { display: flex; align-items: center; }
.search { width: 274px; height: 40px; margin: 0 3px 0 16px; padding: 0 5px 0 14px; display: flex; align-items: center; gap: 11px; border: 1px solid #4e5c62; border-radius: 20px; background: #36474f; }
.search input { flex: 1; min-width: 0; border: 0; padding: 0; background: none; color: #fff; font-size: 16px; }
.search input::placeholder { color: #d0d5d8; }
.app-icon { position: relative; width: 49px; height: 50px; margin: 0 3px; display: flex; align-items: center; justify-content: center; border-radius: 5px; }
.app-icon--active { background: #343434; }
.app-icon--active::after, .app-icon--open::after { content: ""; position: absolute; bottom: 1px; left: 50%; width: 8px; height: 4px; margin-left: -4px; border-radius: 2px; background: #9a9a9a; }
.app-icon--active::after { width: 20px; margin-left: -10px; background: #4cc2ff; }
.tray { display: flex; align-items: center; justify-content: flex-end; gap: 22px; padding-right: 24px; font-size: 15px; }
.lang { text-align: center; margin-left: 3px; }
.lang + svg, .lang + svg + svg { margin-right: -12px; }
.lang, .clock { padding-bottom: 2px; }
.clock { text-align: right; }
```
